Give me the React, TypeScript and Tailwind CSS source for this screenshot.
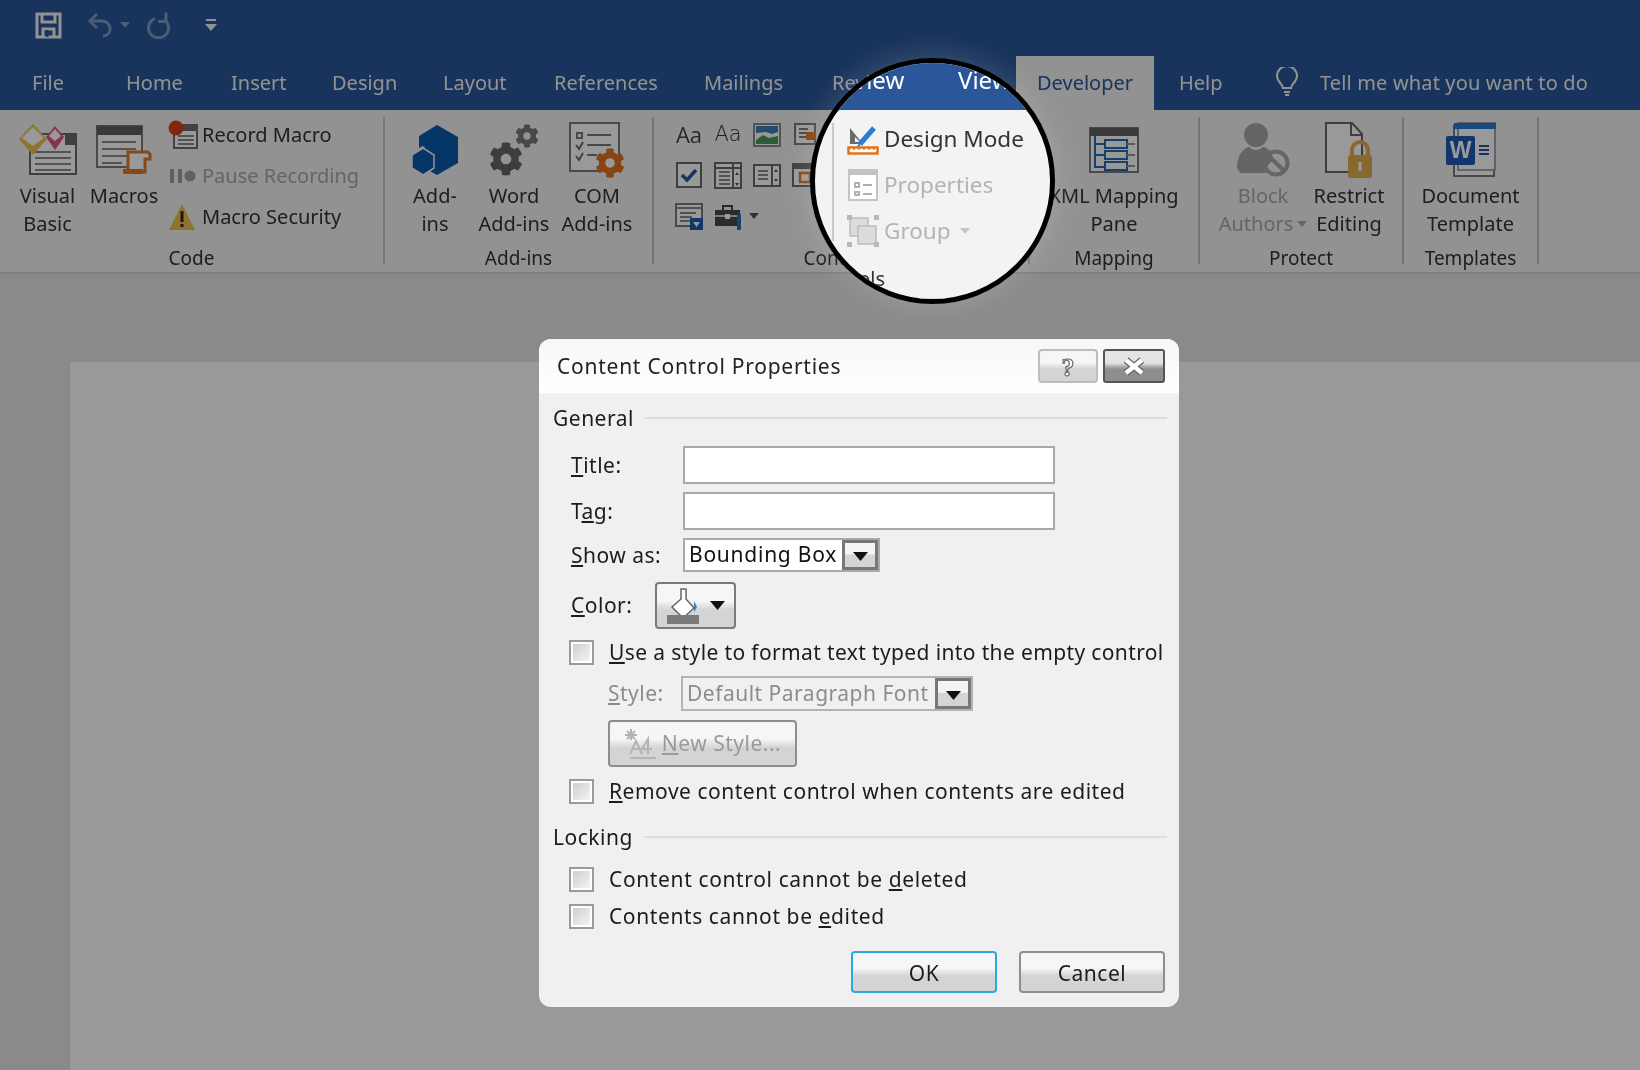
import React from "react";
import { FaCog } from "react-icons/fa";

const Gear = ({ size, color, className = "" }: { size: number; color: string; className?: string }) => (
  <FaCog size={size} color={color} className={className} />
);

const SaveIcon = () => (
  <svg width="27" height="27" viewBox="0 0 27 27" fill="none" stroke="#f3f3f3" strokeWidth="3">
    <path d="M2 2h23v23H2z" />
    <path d="M7 2v8h13V2" />
    <path d="M8 25v-8h11v8" strokeWidth="3" />
    <path d="M12 18v7" stroke="#2b579a" strokeWidth="3" />
  </svg>
);
const UndoIcon = () => (
  <svg width="28" height="26" viewBox="0 0 28 26" fill="none" stroke="#7f9ac4" strokeWidth="3">
    <path d="M10 2 3 9l7 7" />
    <path d="M3 9h12c5 0 8 4 8 8s-3 7-7 7" />
  </svg>
);
const RedoIcon = () => (
  <svg width="26" height="28" viewBox="0 0 26 28" fill="none" stroke="#7f9ac4" strokeWidth="3">
    <path d="M17 8.5A10 10 0 1 1 8 7.5" />
    <path d="M19 1.5v9h-8" />
  </svg>
);
const Caret = ({ color = "#7f9ac4" }: { color?: string }) => (
  <svg width="10" height="6" viewBox="0 0 10 6"><path d="M0 0h10L5 6z" fill={color} /></svg>
);
const CustomizeIcon = () => (
  <svg width="12" height="14" viewBox="0 0 12 14"><path d="M1 1h10v2H1zM0 6h12l-6 7z" fill="#f3f3f3" /></svg>
);
const BulbIcon = () => (
  <svg width="24" height="30" viewBox="0 0 24 30" fill="none" stroke="#f3f3f3" strokeWidth="2">
    <path d="M8 21c0-4-6-6-6-12a10 10 0 0 1 20 0c0 6-6 8-6 12z" />
    <path d="M9 25h6M10 28h4" />
  </svg>
);

const Lines = ({ x, y, w, n, gap = 6, c = "#8a8a8a" }: { x: number; y: number; w: number; n: number; gap?: number; c?: string }) => (
  <g stroke={c} strokeWidth="2">
    {Array.from({ length: n }).map((_, i) => (
      <path key={i} d={`M${x} ${y + i * gap}h${w}`} />
    ))}
  </g>
);

const VisualBasicIcon = () => (
  <svg width="58" height="52" viewBox="0 0 58 52">
    <path d="M11 10h46v40H11z" fill="#fff" stroke="#6a6a6a" strokeWidth="2" />
    <path d="M46 10h11v11H46z" fill="#6a6a6a" />
    <Lines x={16} y={28} w={36} n={4} />
    <path d="M14 0l14 15-14 16L0 15z" fill="#f0c050" />
    <path d="M14 3l11 11-11 8-11-8z" fill="#fff" />
    <path d="M36 2l9 11-9 13-9-13z" fill="#e0567e" />
    <path d="M36 5l6 7-6 5-6-5z" fill="#fff" />
  </svg>
);
const MacrosIcon = () => (
  <svg width="56" height="50" viewBox="0 0 56 50">
    <path d="M1 1h45v41H1z" fill="#fff" stroke="#7a7a7a" strokeWidth="2" />
    <path d="M1 1h45v9H1z" fill="#5f5f5f" />
    <Lines x={6} y={17} w={34} n={3} gap={7} />
    <path d="M6 38h20" stroke="#8a8a8a" strokeWidth="2" />
    <path d="M32 27h20l2 2v5h-5v13H32z" fill="#fff" stroke="#e07a24" strokeWidth="3" />
    <path d="M27 44h20v5H27z" fill="#e07a24" />
  </svg>
);
const RecordIcon = () => (
  <svg width="30" height="30" viewBox="0 0 30 30">
    <path d="M6 5h23v23H6z" fill="#fff" stroke="#6f6f6f" strokeWidth="2" />
    <path d="M6 5h23v6H6z" fill="#6f6f6f" />
    <Lines x={10} y={16} w={16} n={3} gap={4} />
    <circle cx="8" cy="8" r="7.5" fill="#d8401c" />
  </svg>
);
const PauseIcon = () => (
  <svg width="28" height="18" viewBox="0 0 28 18">
    <path d="M2 2h4v14H2zM10 2h4v14h-4z" fill="#a0a0a0" />
    <circle cx="22" cy="9" r="5.5" fill="#a0a0a0" />
  </svg>
);
const WarnIcon = () => (
  <svg width="28" height="28" viewBox="0 0 28 28">
    <path d="M14 1 27 27H1z" fill="#f0c050" />
    <path d="M12.500 8h3v11h-3zM12.500 21h3v3h-3z" fill="#2b2b2b" />
  </svg>
);
const AddInsIcon = () => (
  <svg width="48" height="52" viewBox="0 0 48 52" fill="#0b5aa8">
    <path d="M26 1l21 12v26L26 51 17 46V27l-4-3 6-4 0 0 7-4z" />
    <path d="M26 1 8 12v12l4-2 12 8v16l2 5z" />
    <path d="M12 24l11 7v13l-11 7-11-7V31z" stroke="#f3f3f3" strokeWidth="1.500" />
  </svg>
);
const WordAddIcon = () => (
  <div className="relative w-[50px] h-[52px]">
    <Gear size={24} color="#7a7a7a" className="absolute right-0 top-0" />
    <Gear size={34} color="#666" className="absolute left-0 bottom-0" />
  </div>
);
const ComIcon = () => (
  <div className="relative w-[56px] h-[56px]">
    <svg width="52" height="52" viewBox="0 0 52 52" fill="none" stroke="#7a7a7a" strokeWidth="2">
      <path d="M1 1h49v48H1z" fill="#fff" />
      <path d="M8 11h5v5H8zM18 13h24M18 23h24M18 33h10" />
      <path d="M7 23l3 4 4-7M7 34l3 4 4-7" stroke="#6a6a6a" />
    </svg>
    <Gear size={30} color="#e0741e" className="absolute right-0 bottom-0" />
  </div>
);

const Sm = ({ children }: { children: React.ReactNode }) => (
  <svg width="28" height="28" viewBox="0 0 28 28" fill="none">{children}</svg>
);
const ctl = [
  <div key="a" className="text-[22px] leading-7 text-[#444] w-7 text-center font-['Open_Sans',sans-serif]">Aa</div>,
  <div key="b" className="text-[21px] leading-7 text-[#333] w-7 text-center font-['DejaVu_Sans',sans-serif] font-extralight">Aa</div>,
  <Sm key="c">
    <path d="M1 4h26v22H1z" fill="#fff" stroke="#8a8a8a" strokeWidth="2" />
    <path d="M3 6h22v6l-6 2-6-2-10 1z" fill="#3f7fb8" />
    <path d="M3 20l7-5 6 3 9-2v8H3z" fill="#4a9860" />
  </Sm>,
  <Sm key="d">
    <path d="M3 4h20v20H3z" fill="#fff" stroke="#7a7a7a" strokeWidth="2" />
    <path d="M7 9h9M7 13h9M7 17h9" stroke="#7a7a7a" strokeWidth="2" />
    <path d="M14 12h10v8H14z" fill="#e0741e" />
  </Sm>,
  <Sm key="e">
    <path d="M2 2h24v24H2z" fill="#fff" stroke="#6a6a6a" strokeWidth="2" />
    <path d="M7 14l5 5 9-10" stroke="#1e5aa8" strokeWidth="3.500" />
  </Sm>,
  <Sm key="f">
    <path d="M1 2h26v25H1z" fill="#fff" stroke="#6a6a6a" strokeWidth="2" />
    <path d="M1 2h26v5H1zM19 2v25" stroke="#6a6a6a" strokeWidth="2" />
    <path d="M5 11h11M5 15h11M5 19h11M5 23h11" stroke="#8a8a8a" strokeWidth="2" />
    <path d="M21 14h4l-2-3zM21 22h4l-2 3z" fill="#555" />
  </Sm>,
  <Sm key="g">
    <path d="M1 4h26v21H1z" fill="#fff" stroke="#6a6a6a" strokeWidth="2" />
    <path d="M19 4v21" stroke="#6a6a6a" strokeWidth="2" />
    <path d="M5 10h10M5 14h10M5 18h10" stroke="#8a8a8a" strokeWidth="2" />
    <path d="M21 11h4l-2-3zM21 18h4l-2 3z" fill="#555" />
  </Sm>,
  <Sm key="h">
    <path d="M1 3h26v22H1z" fill="#fff" stroke="#6a6a6a" strokeWidth="2" />
    <path d="M1 3h26v5H1z" fill="#6a6a6a" />
    <path d="M8 12h10v9H8z" stroke="#e0741e" strokeWidth="2.500" />
  </Sm>,
  <Sm key="i">
    <path d="M1 2h26v22H1z" fill="#fff" stroke="#7a7a7a" strokeWidth="2" />
    <path d="M1 6h26M5 11h16M5 15h12M5 19h12" stroke="#8a8a8a" strokeWidth="2" />
    <path d="M15 16h13v12H15z" fill="#1e5aa8" />
    <path d="M18 20h7l-3.500 5z" fill="#fff" />
  </Sm>,
  <Sm key="j">
    <path d="M9 8V4h9v4" stroke="#444" strokeWidth="2" />
    <path d="M1 8h25v16H1z" fill="#4a4a4a" />
    <path d="M1 14h25" stroke="#fff" strokeWidth="1.500" />
    <path d="M11 12h5v5h-5z" fill="#fff" />
    <path d="M23 12h4v16h-4z" fill="#2a6fb8" />
  </Sm>,
];

const XmlIcon = () => (
  <svg width="50" height="46" viewBox="0 0 50 46" fill="none">
    <path d="M1 1h48v44H1z" fill="#fff" stroke="#7a7a7a" strokeWidth="2" />
    <path d="M1 1h48v8H1z" fill="#5f5f5f" />
    <path d="M16 13h22v8H16zM16 24h22v8H16zM16 35h22v8H16z" stroke="#2b6cb0" strokeWidth="2" fill="#fff" />
    <path d="M6 9v31h10M6 17h10M6 28h10" stroke="#2b6cb0" strokeWidth="2" />
    <path d="M38 17h8M38 28h8M38 39h8" stroke="#9a9a9a" strokeWidth="2" />
  </svg>
);
const BlockIcon = () => (
  <svg width="54" height="56" viewBox="0 0 54 56">
    <circle cx="20" cy="13" r="12" fill="#a8a8a8" />
    <path d="M1 46c0-12 6-20 12-21 4 4 10 4 14 0 6 1 10 6 10 14-4 2-7 6-7 12H4z" fill="#a8a8a8" />
    <circle cx="40" cy="41" r="11.500" fill="none" stroke="#a8a8a8" strokeWidth="4" />
    <path d="M32 33l16 16" stroke="#a8a8a8" strokeWidth="4" />
  </svg>
);
const RestrictIcon = () => (
  <svg width="50" height="56" viewBox="0 0 50 56">
    <path d="M2 1h26l10 11v38H2z" fill="#fff" stroke="#6a6a6a" strokeWidth="2" />
    <path d="M27 1v12h11" fill="none" stroke="#6a6a6a" strokeWidth="2" />
    <path d="M28 34v-6a8 8 0 0 1 16 0v6" fill="none" stroke="#e3b04b" strokeWidth="4" />
    <rect x="24" y="33" width="24" height="23" rx="2" fill="#e3b04b" />
    <path d="M34.500 40h3v9h-3z" fill="#fff" />
  </svg>
);
const DocIcon = () => (
  <svg width="52" height="56" viewBox="0 0 52 56">
    <path d="M9 4h40v50H9z" fill="#fff" stroke="#7a7a7a" strokeWidth="2" />
    <path d="M13 1h37v47H13z" fill="#fff" stroke="#8a8a8a" strokeWidth="1.500" />
    <path d="M9 1h42v6H9z" fill="#2b7cd3" />
    <rect x="1" y="14" width="29" height="29" rx="2" fill="#1e5ab4" />
    <text x="15.500" y="36" textAnchor="middle" fontSize="23" fontWeight="700" fill="#fff" fontFamily="Liberation Sans, sans-serif">W</text>
    <path d="M34 24h10M34 28h10M34 32h10" stroke="#2b579a" strokeWidth="2" />
  </svg>
);

const Big = ({ icon, lines, w, dim = false, caret = false }: { icon: React.ReactNode; lines: string[]; w: number; dim?: boolean; caret?: boolean }) => (
  <div className="flex flex-col items-center shrink-0" style={{ width: w }}>
    <div className="h-[65px] flex items-center justify-center">{icon}</div>
    <div className={`text-[20px] leading-[28px] text-center whitespace-nowrap ${dim ? "text-[#a8a8a8]" : "text-[#333]"}`}>
      {lines.map((l, i) => (
        <div key={i} className="flex items-center justify-center gap-1">
          {l}
          {caret && i === lines.length - 1 ? <Caret color="#a8a8a8" /> : null}
        </div>
      ))}
    </div>
  </div>
);

const Small = ({ icon, text, dim = false }: { icon: React.ReactNode; text: string; dim?: boolean }) => (
  <div className={`h-[41px] flex items-center text-[20px] whitespace-nowrap ${dim ? "text-[#a8a8a8]" : "text-[#333]"}`}>
    <div className="w-[34px] flex justify-start">{icon}</div>
    {text}
  </div>
);

const Group = ({ label, w, children, className = "" }: { label: string; w: number; children?: React.ReactNode; className?: string }) => (
  <div className="shrink-0 h-[147px] border-r-2 border-[#c4c4c4] flex flex-col" style={{ width: w }}>
    <div className={`flex-1 flex ${className}`}>{children}</div>
    <div className="text-center text-[19px] leading-[24px] text-[#333] -mb-[6px]">{label}</div>
  </div>
);

const tabs: [string, number][] = [
  ["File", 94],
  ["Home", 105],
  ["Insert", 101],
  ["Design", 111],
  ["Layout", 111],
  ["References", 150],
  ["Mailings", 128],
  ["Review", 184],
];

const BevelBtn = ({ className = "", children }: { className?: string; children?: React.ReactNode }) => (
  <div className={`flex items-center justify-center rounded-[4px] border-2 bg-gradient-to-b from-[#f6f6f6] from-40% to-[#d4d4d4] to-60% ${className}`}>{children}</div>
);

const Drop = () => (
  <div className="w-[36px] h-full border-[3px] border-[#777] bg-gradient-to-b from-[#f4f4f4] from-45% to-[#d4d4d4] to-50% flex items-end justify-center pb-[6px]">
    <svg width="15" height="9" viewBox="0 0 15 9"><path d="M0 0h15L7.500 9z" fill="#111" /></svg>
  </div>
);
const Check = () => (
  <div className="w-[25px] h-[25px] shrink-0 border-2 border-[#9a9a9a] bg-white p-[2px]">
    <div className="w-full h-full bg-gradient-to-br from-[#cfcfcf] to-[#f4f4f4]" />
  </div>
);
const CheckRow = ({ children, mt, track }: { children: React.ReactNode; mt: string; track: string }) => (
  <div className={`flex items-center h-[24px] pl-[16px] gap-[15px] text-[21px] text-[#1c1c1c] whitespace-nowrap ${mt}`}>
    <Check />
    <span className={`pt-[2px] ${track}`}>{children}</span>
  </div>
);
const SectionHead = ({ text, mt }: { text: string; mt: string }) => (
  <div className={`flex items-center h-[26px] text-[21px] text-[#1c1c1c] tracking-[0.5px] ${mt}`}>
    <span className="w-[91px] shrink-0 pt-[2px]">{text}</span>
    <div className="flex-1 h-[2px] bg-[#d5dfe6]" />
  </div>
);

const Dialog = () => (
  <div className="absolute left-[539px] top-[339px] w-[640px] h-[668px] rounded-[12px] overflow-hidden bg-[#f0f0f0]">
    <div className="h-[54px] bg-gradient-to-b from-[#f7f7f7] to-white flex items-center pl-[18px] pr-[14px]">
      <span className="flex-1 text-[21px] text-[#222] tracking-[0.75px] pt-[1px]">Content Control Properties</span>
      <div className="flex gap-[5px]">
        <BevelBtn className="w-[60px] h-[34px] border-[#bdbdbd] rounded-[3px]">
          <svg width="20" height="28" viewBox="0 0 20 28">
            <text x="10" y="24" textAnchor="middle" fontSize="26" fontWeight="700" fill="#fff" stroke="#666" strokeWidth="1.200" fontFamily="Liberation Serif, serif">?</text>
          </svg>
        </BevelBtn>
        <div className="w-[62px] h-[34px] flex items-center justify-center rounded-[3px] border-2 border-[#555] bg-gradient-to-b from-[#e4e4e4] from-40% to-[#8e8e8e] to-60%">
          <svg width="24" height="19" viewBox="0 0 24 19">
            <path d="M4 3l16 13M20 3 4 16" stroke="#666" strokeWidth="7" />
            <path d="M4 3l16 13M20 3 4 16" stroke="#fff" strokeWidth="4.500" />
          </svg>
        </div>
      </div>
    </div>
    <div className="pl-[14px] pr-[12px]">
      <SectionHead text="General" mt="mt-[12px]" />
      <div className="pl-[18px] text-[21px] text-[#1c1c1c] tracking-[0.5px]">
        <div className="flex items-center mt-[15px] h-[38px]">
          <span className="w-[112px] pt-[1px]"><u>T</u>itle:</span>
          <div className="w-[372px] h-full bg-white border-2 border-[#a9a9a9]" />
        </div>
        <div className="flex items-center mt-[8px] h-[38px]">
          <span className="w-[112px] pt-[1px]">T<u>a</u>g:</span>
          <div className="w-[372px] h-full bg-white border-2 border-[#a9a9a9]" />
        </div>
        <div className="flex items-center mt-[8px] h-[34px]">
          <span className="w-[112px] pt-[1px]"><u>S</u>how as:</span>
          <div className="w-[197px] h-full bg-white border-2 border-[#a9a9a9] flex items-center justify-between pl-[4px]">
            <span className="whitespace-nowrap text-[21px] tracking-[0.75px] text-[#111]">Bounding Box</span>
            <Drop />
          </div>
        </div>
        <div className="flex items-center mt-[10px] h-[47px]">
          <span className="w-[84px]"><u>C</u>olor:</span>
          <BevelBtn className="w-[81px] h-full border-[#7a7a7a] gap-[10px]">
            <svg width="34" height="36" viewBox="0 0 34 36">
              <path d="M15 1h5v10l8 9-11 10-11-11 9-8z" fill="#fff" stroke="#666" strokeWidth="1.500" />
              <path d="M28 13l3 6-3 5z" fill="#3f7fb8" />
              <path d="M1 27h32v9H1z" fill="#7a7a7a" />
            </svg>
            <svg width="15" height="9" viewBox="0 0 15 9"><path d="M0 0h15L7.500 9z" fill="#111" /></svg>
          </BevelBtn>
        </div>
      </div>
      <CheckRow mt="mt-[11px]" track="tracking-[0.37px]"><u>U</u>se a style to format text typed into the empty control</CheckRow>
      <div className="flex items-center mt-[12px] h-[35px] pl-[55px] text-[21px] text-[#8c8c8c] tracking-[0.5px]">
        <span className="w-[73px]"><u>S</u>tyle:</span>
        <div className="w-[292px] h-full border-2 border-[#b4b4b4] flex items-center justify-between pl-[4px]">
          <span className="whitespace-nowrap tracking-[0.5px]">Default Paragraph Font</span>
          <Drop />
        </div>
      </div>
      <div className="pl-[55px] mt-[9px]">
        <BevelBtn className="w-[189px] h-[47px] border-[#8e8e8e] gap-[4px] text-[21px] text-[#9a9a9a] tracking-[0.5px]">
          <svg width="34" height="32" viewBox="0 0 34 32" fill="none" stroke="#b4b4b4" strokeWidth="2">
            <path d="M7 1v11M1 7h12M3 3l8 8M11 3l-8 8" />
            <path d="M6 26l6-13 6 13M8 21h8M24 26V11l-6 10h10M6 30h26" />
          </svg>
          <span><u>N</u>ew Style...</span>
        </BevelBtn>
      </div>
      <CheckRow mt="mt-[12px]" track="tracking-[0.52px]"><u>R</u>emove content control when contents are edited</CheckRow>
      <SectionHead text="Locking" mt="mt-[21px]" />
      <CheckRow mt="mt-[17px]" track="tracking-[0.63px]">Content control cannot be <u>d</u>eleted</CheckRow>
      <CheckRow mt="mt-[13px]" track="tracking-[0.6px]">Contents cannot be <u>e</u>dited</CheckRow>
      <div className="flex justify-end gap-[22px] mt-[23px] pr-[2px] text-[21px] text-[#1c1c1c] tracking-[0.5px]">
        <BevelBtn className="w-[146px] h-[42px] border-[#2ba6de] pt-[3px]">OK</BevelBtn>
        <BevelBtn className="w-[146px] h-[42px] border-[#8e8e8e] pt-[3px]">Cancel</BevelBtn>
      </div>
    </div>
  </div>
);

const Lens = () => (
  <div className="absolute left-[810px] top-[58px] w-[245px] h-[246px] rounded-full border-[5px] border-black overflow-hidden bg-[#f3f3f3] shadow-[0_0_30px_rgba(255,255,255,0.18)]">
    <div className="h-[47px] bg-[#2b579a] flex pl-[11px] pt-[1px] text-[24px] leading-[32px] text-white whitespace-nowrap">
      <span className="w-[132px]">Review</span>
      <span>View</span>
    </div>
    <div className="h-[190px] border-b-2 border-[#d4d4d4] flex pl-[17px] pt-[13px]">
      <div className="w-[2px] h-[118px] bg-[#c9c9c9]" />
      <div className="pl-[13px] flex flex-col gap-[14px] text-[22.5px] leading-[32px]">
        <div className="flex items-center gap-[5px] text-[#333]">
          <svg width="32" height="32" viewBox="0 0 32 32" fill="none">
            <path d="M3 1v20h13L3 5z" fill="#6a6a6a" />
            <path d="M8 14v5h5z" fill="#f3f3f3" />
            <path d="M13 21 27 5" stroke="#2b7cd3" strokeWidth="5" />
            <path d="M10 25l3-4" stroke="#2b7cd3" strokeWidth="2" />
            <path d="M1.500 24.500h29v6h-29z" stroke="#e0741e" strokeWidth="2.500" fill="#fff" />
            <path d="M7 25v2M12 25v2M17 25v2M22 25v2M27 25v2" stroke="#e0741e" strokeWidth="1.500" />
          </svg>
          Design Mode
        </div>
        <div className="flex items-center gap-[5px] text-[#b4b4b4]">
          <svg width="32" height="32" viewBox="0 0 32 32" fill="none">
            <path d="M2 1h28v30H2z" fill="#fff" stroke="#c4c4c4" strokeWidth="2" />
            <path d="M2 1h28v5H2z" fill="#c4c4c4" />
            <path d="M8 14h4v4H8zM8 23h4v3H8zM16 16h9M16 25h9" stroke="#b0b0b0" strokeWidth="2" />
          </svg>
          Properties
        </div>
        <div className="flex items-center gap-[5px] text-[#b4b4b4]">
          <svg width="32" height="32" viewBox="0 0 32 32" fill="none">
            <path d="M3 3h18v18H3z" fill="#dcdcdc" stroke="#bdbdbd" strokeWidth="1.500" />
            <path d="M11 11h18v18H11z" fill="#dcdcdc" stroke="#bdbdbd" strokeWidth="1.500" />
            <path d="M0 0h5v5H0zM27 0h5v5h-5zM0 27h5v5H0zM27 27h5v5h-5z" fill="#b8b8b8" />
          </svg>
          <span className="mr-[4px]">Group</span>
          <Caret color="#c4c4c4" />
        </div>
      </div>
    </div>
    <div className="absolute left-[-9px] top-[202px] text-[20px] leading-[28px] text-[#333]">Controls</div>
  </div>
);

export default function App() {
  return (
    <div className="relative w-[1640px] h-[1070px] overflow-hidden bg-[#e6e6e6] font-['Noto_Sans',sans-serif] blur-[0.4px]">
      <div className="h-[56px] bg-[#2b579a] flex items-center pl-[35px] pb-[6px]">
        <SaveIcon />
        <div className="ml-[25px] flex items-center gap-[5px]"><UndoIcon /><Caret /></div>
        <div className="ml-[17px]"><RedoIcon /></div>
        <div className="ml-[32px]"><CustomizeIcon /></div>
      </div>
      <div className="h-[54px] bg-[#2b579a] flex text-[20px] text-[#f3f3f3] pl-[32px] whitespace-nowrap">
        {tabs.map(([t, w]) => (
          <div key={t} className="pt-[12px]" style={{ width: w }}>{t}</div>
        ))}
        <div className="w-[138px] bg-[#f3f3f3] text-[#2b579a] pt-[12px] pl-[21px]">Developer</div>
        <div className="ml-[25px] pt-[12px] w-[96px]">Help</div>
        <div className="pt-[11px] w-[45px]"><BulbIcon /></div>
        <div className="pt-[12px] tracking-[0.15px]">Tell me what you want to do</div>
      </div>
      <div className="h-[164px] bg-[#f3f3f3] border-b-2 border-[#d2d2d2] flex pt-[7px]">
        <Group label="Code" w={385} className="pl-[9px]">
          <Big w={77} lines={["Visual", "Basic"]} icon={<VisualBasicIcon />} />
          <Big w={76} lines={["Macros"]} icon={<MacrosIcon />} />
          <div className="pl-[6px] -mt-[3px]">
            <Small icon={<RecordIcon />} text="Record Macro" />
            <Small icon={<PauseIcon />} text="Pause Recording" dim />
            <Small icon={<WarnIcon />} text="Macro Security" />
          </div>
        </Group>
        <Group label="Add-ins" w={269} className="pl-[13px]">
          <Big w={74} lines={["Add-", "ins"]} icon={<AddInsIcon />} />
          <Big w={84} lines={["Word", "Add-ins"]} icon={<WordAddIcon />} />
          <Big w={82} lines={["COM", "Add-ins"]} icon={<ComIcon />} />
        </Group>
        <Group label="Controls" w={376} className="pl-[21px] pt-[3px]">
          <div className="grid grid-cols-[28px_28px_28px_28px] gap-x-[11px] gap-y-[13px] content-start">
            {ctl.map((c, i) => <div key={i}>{c}</div>)}
            <div className="col-start-3 row-start-3 self-center -ml-[4px]"><Caret color="#555" /></div>
          </div>
        </Group>
        <Group label="Mapping" w={170} className="justify-center">
          <Big w={160} lines={["XML Mapping", "Pane"]} icon={<XmlIcon />} />
        </Group>
        <Group label="Protect" w={204} className="pl-[19px]">
          <Big w={88} dim caret lines={["Block", "Authors"]} icon={<BlockIcon />} />
          <Big w={84} lines={["Restrict", "Editing"]} icon={<RestrictIcon />} />
        </Group>
        <Group label="Templates" w={135} className="justify-center">
          <Big w={120} lines={["Document", "Template"]} icon={<DocIcon />} />
        </Group>
      </div>
      <div className="ml-[70px] mt-[88px] h-[800px] bg-white" />
      <div className="absolute inset-0 bg-black/40" />
      <Lens />
      <Dialog />
    </div>
  );
}
